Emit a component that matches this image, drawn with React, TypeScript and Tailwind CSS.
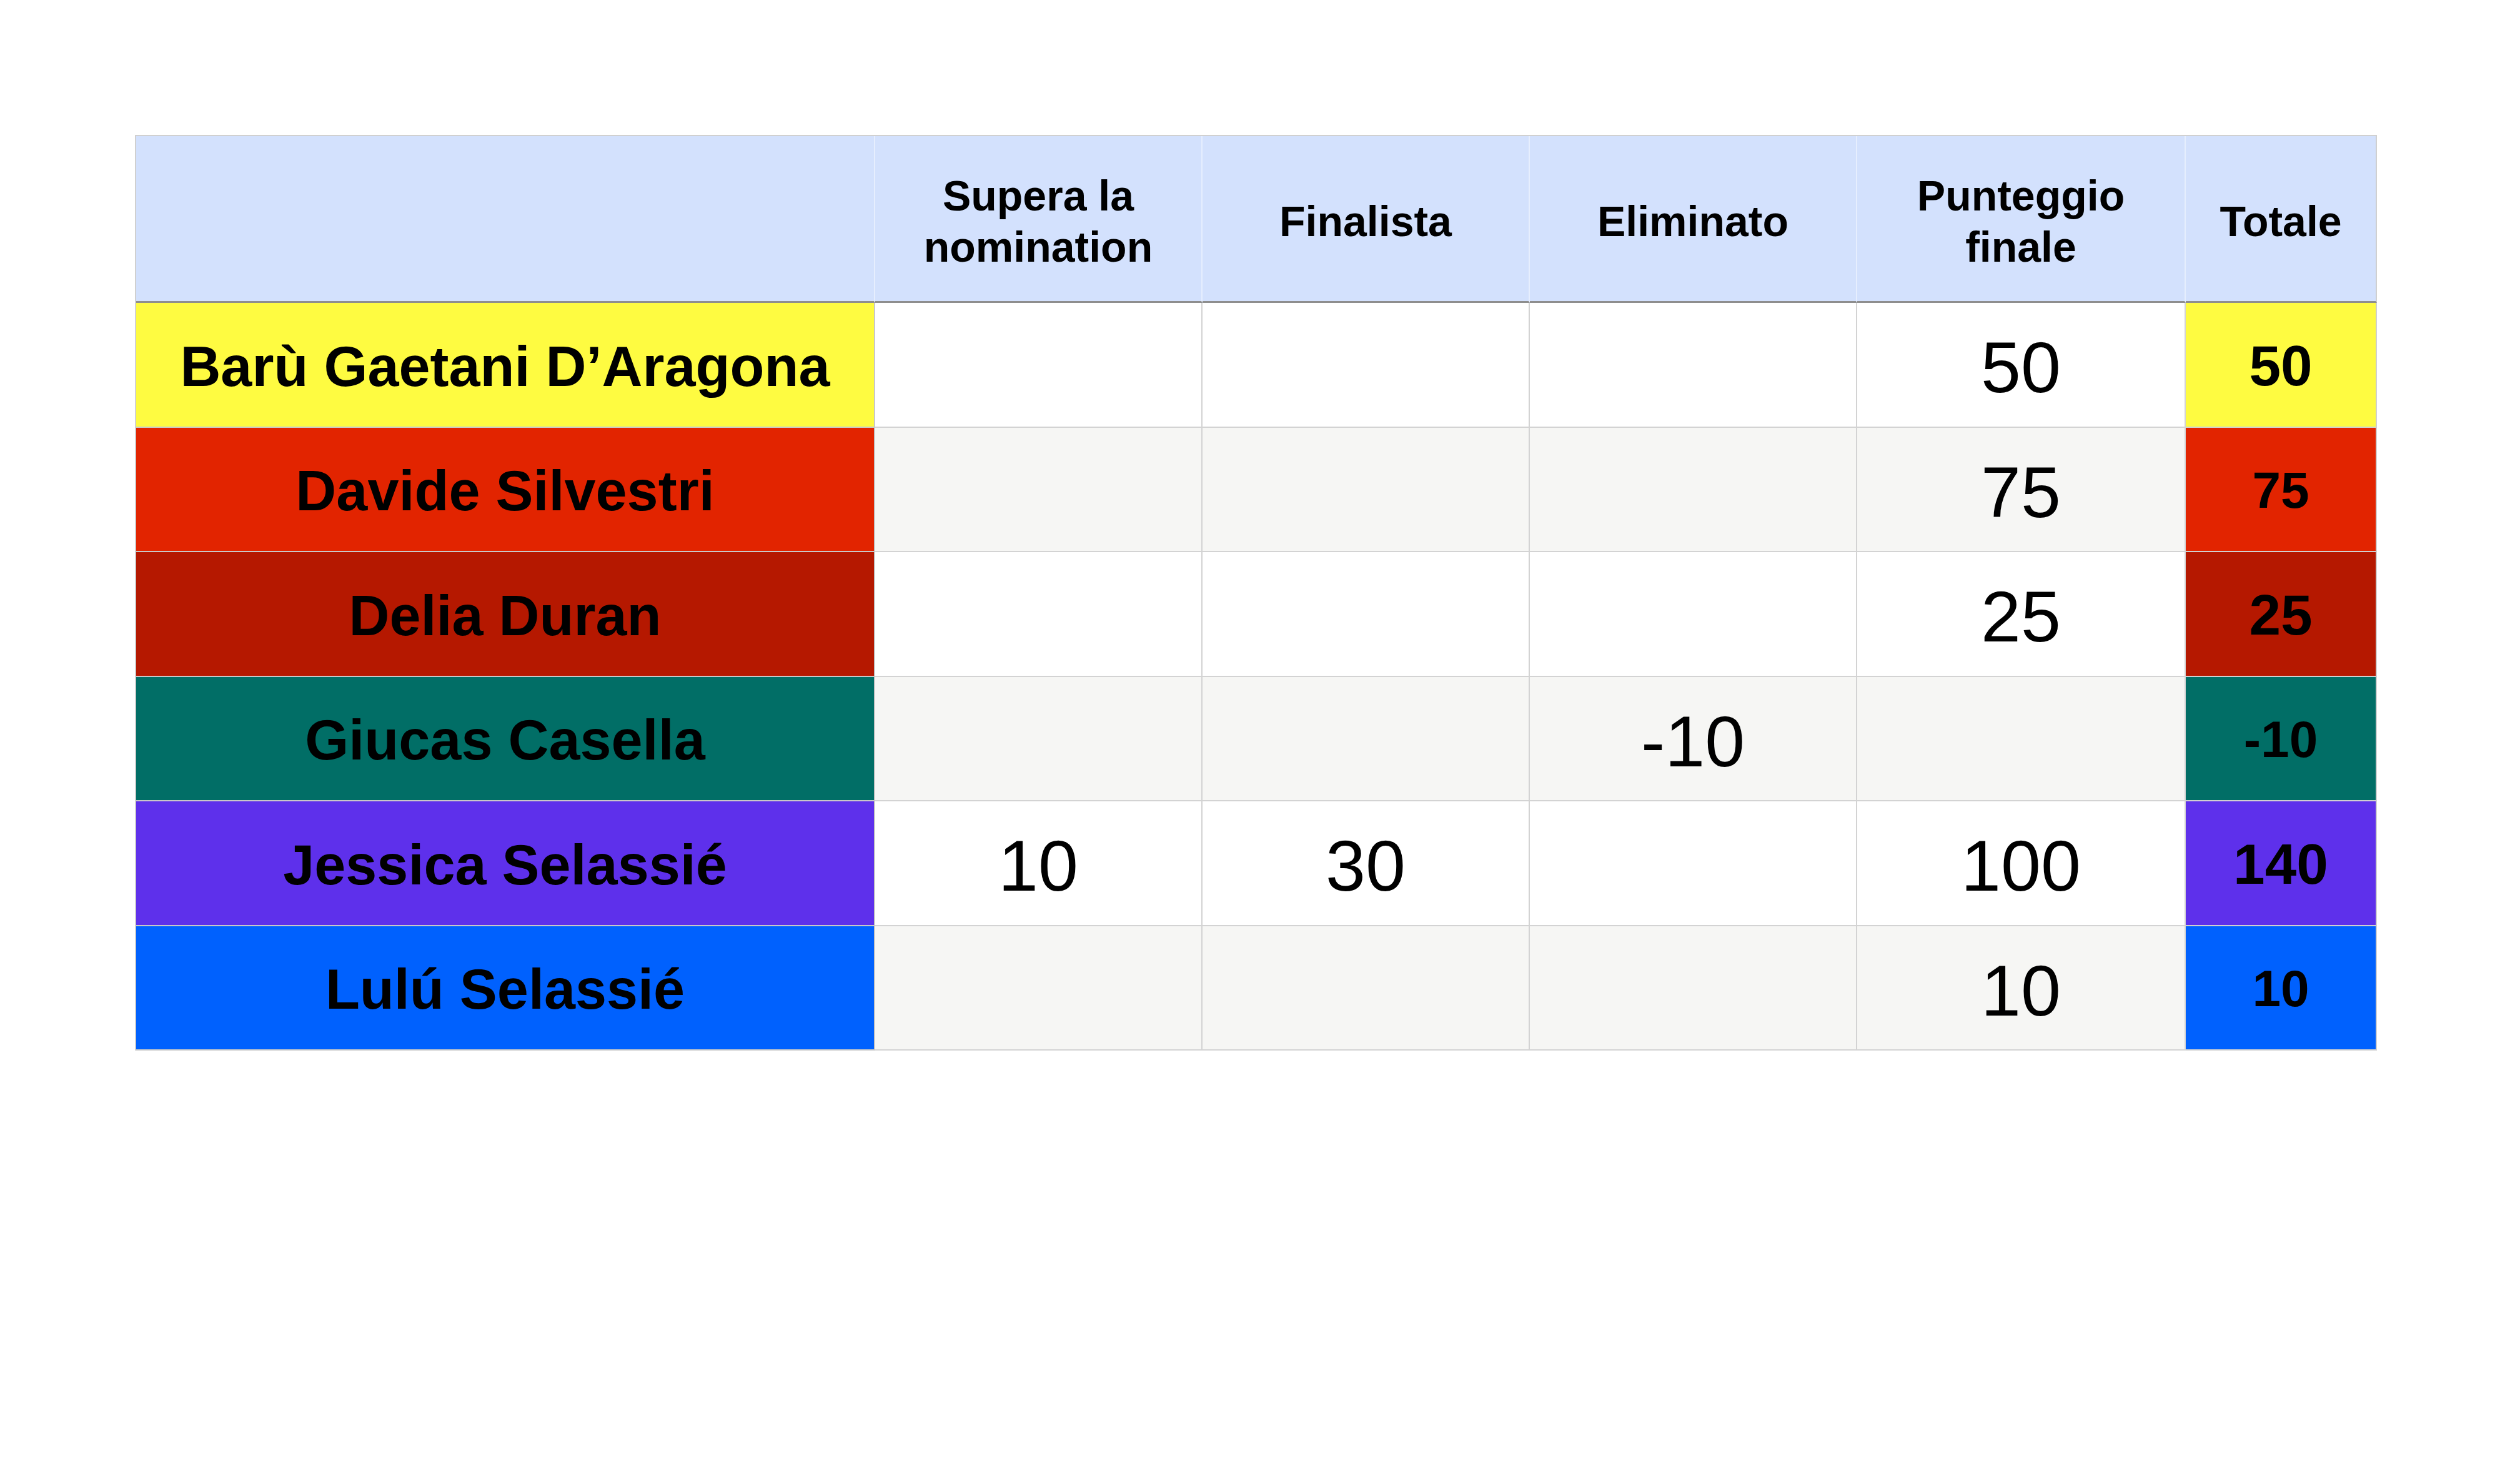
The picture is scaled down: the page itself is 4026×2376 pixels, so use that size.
import React from "react";

type Row = {
  name: string;
  bg: string;
  vals: string[];
  total: string;
  small: boolean;
  alt: boolean;
};

const rows: Row[] = [
  { name: "Barù Gaetani D’Aragona", bg: "bg-[#fefb41]", vals: ["", "", "", "50"], total: "50", small: false, alt: false },
  { name: "Davide Silvestri", bg: "bg-[#e22400]", vals: ["", "", "", "75"], total: "75", small: true, alt: true },
  { name: "Delia Duran", bg: "bg-[#b51800]", vals: ["", "", "", "25"], total: "25", small: false, alt: false },
  { name: "Giucas Casella", bg: "bg-[#016e66]", vals: ["", "", "-10", ""], total: "-10", small: true, alt: true },
  { name: "Jessica Selassié", bg: "bg-[#5e30eb]", vals: ["10", "30", "", "100"], total: "140", small: false, alt: false },
  { name: "Lulú Selassié", bg: "bg-[#0061fe]", vals: ["", "", "", "10"], total: "10", small: true, alt: true },
];

const headers = ["", "Supera la\nnomination", "Finalista", "Eliminato", "Punteggio\nfinale", "Totale"];

export default function App() {
  return (
    <div
      className="w-[4026px] h-[2376px] bg-white pt-[216px] pl-[216px]"
      style={{ fontFamily: '"Liberation Sans", Arial, Helvetica, sans-serif' }}
    >
      <div className="w-[3589px] border-t-2 border-l-2 border-[#d0d0d0] grid grid-cols-[1183px_524px_524px_524px_526px_306px] text-black">
        {headers.map((h, i) => (
          <div
            key={"h" + i}
            className={`h-[267px] bg-[#d3e1fd] border-b-[3px] border-b-[#8e8e8e] flex items-center justify-center text-center font-bold text-[68px] leading-[82px] whitespace-pre-line pt-[8px] ${
              i === headers.length - 1 ? "border-r-2 border-r-[#d0d0d0]" : "border-r-2 border-r-[#e6eefe]"
            }`}
          >
            {h}
          </div>
        ))}
        {rows.map((r, ri) => (
          <React.Fragment key={"r" + ri}>
            <div
              className={`h-[199.5px] ${r.bg} border-r-2 border-b-2 border-[#c8c8c8] flex items-center justify-center font-bold text-[90px] leading-none pt-[6px]`}
            >
              {r.name}
            </div>
            {r.vals.map((v, vi) => (
              <div
                key={"v" + vi}
                className={`h-[199.5px] ${r.alt ? "bg-[#f6f6f4]" : "bg-white"} border-r-2 border-b-2 border-[#d3d3d3] flex items-center justify-center text-[115px] leading-none pt-[10px]`}
              >
                {v}
              </div>
            ))}
            <div
              className={`h-[199.5px] ${r.bg} border-r-2 border-b-2 border-[#d0d0d0] flex items-center justify-center font-bold leading-none ${
                r.small ? "text-[82px]" : "text-[91px]"
              } pt-[4px]`}
            >
              {r.total}
            </div>
          </React.Fragment>
        ))}
      </div>
    </div>
  );
}
